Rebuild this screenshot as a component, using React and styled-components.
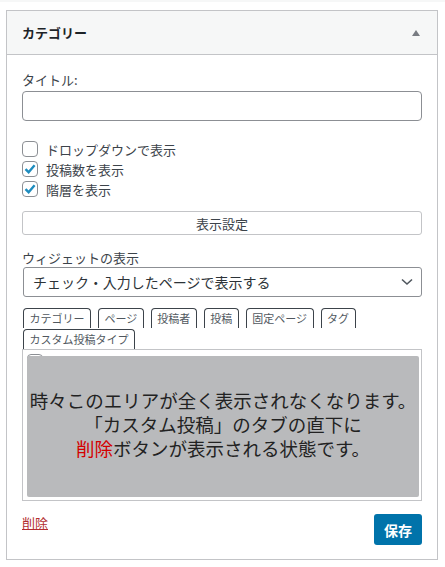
import React from 'react';
import styled, { createGlobalStyle } from 'styled-components';

const GlobalStyle = createGlobalStyle`
    html, body {
        margin: 0;
        padding: 0;
        background: #fff;
        font-family: "Noto Sans CJK JP", "Noto Sans", sans-serif;
        color: #1d2327;
    }
`;

const Page = styled.div`
    padding: 10px 7px 8px 6px;
    border-top: 2px solid #f6f7f7;
`;

const Panel = styled.section`
    border: 1px solid #c3c4c7;
    background: #fff;
    margin-top: -2px;
`;

const PanelHeader = styled.header`
    height: 43px;
    display: flex;
    align-items: center;
    justify-content: space-between;
    padding: 0 17px 0 15px;
    background: #f6f7f7;
    border-bottom: 1px solid #c3c4c7;
    font-size: 13px;
    font-weight: 600;
`;

const Caret = styled.span`
    width: 0;
    height: 0;
    border-left: 4px solid transparent;
    border-right: 4px solid transparent;
    border-bottom: 6px solid #787c82;
`;

const PanelBody = styled.div`
    padding: 16px 15px 14px;
`;

const Label = styled.div`
    font-size: 13px;
    line-height: 18px;
    color: #3c434a;
    margin-bottom: ${p => p.gap || 0}px;
`;

const TextInput = styled.input`
    display: block;
    box-sizing: border-box;
    width: 100%;
    height: 30px;
    border: 1px solid #8c8f94;
    border-radius: 4px;
    background: #fff;
    margin: 0 0 18px;
`;

const CheckRow = styled.label`
    display: flex;
    align-items: center;
    gap: 8px;
    height: 20px;
    font-size: 13px;
    color: #3c434a;
`;

const Box = styled.span`
    box-sizing: border-box;
    width: 16px;
    height: 16px;
    flex: none;
    border: 1px solid #8c8f94;
    border-radius: 4px;
    background: #fff;
    display: flex;
    align-items: center;
    justify-content: center;
`;

const Check = ({ checked }) => (
    <Box>
        {checked && (
            <svg width="14" height="14" viewBox="0 0 14 14">
                <path d="M2.5 7.2 L5.6 10.2 L11.6 3.2" fill="none" stroke="#1e8cbe" strokeWidth="2.4" />
            </svg>
        )}
    </Box>
);

const WideButton = styled.button`
    display: block;
    width: 100%;
    height: 24px;
    margin: 12px 0 14px;
    border: 1px solid #c3c4c7;
    border-radius: 3px;
    background: #fff;
    font-family: inherit;
    font-size: 13px;
    color: #3c434a;
    padding: 0;
`;

const Select = styled.div`
    box-sizing: border-box;
    height: 30px;
    display: flex;
    align-items: center;
    justify-content: space-between;
    padding: 0 8px 0 9px;
    border: 1px solid #8c8f94;
    border-radius: 3px;
    font-size: 14px;
    color: #2c3338;
    margin-left: 1px;
`;

const Tabs = styled.div`
    display: flex;
    flex-wrap: wrap;
    column-gap: 7px;
    row-gap: 1px;
    margin: 11px 0 0 1px;
`;

const Tab = styled.span`
    height: 20px;
    box-sizing: border-box;
    padding: 0 5.5px;
    border: 1px solid #3c434a;
    border-bottom: none;
    border-radius: 4px 4px 0 0;
    background: #fff;
    font-size: 11px;
    line-height: 19px;
    color: #50575e;
`;

const ListBox = styled.div`
    position: relative;
    box-sizing: border-box;
    height: 152px;
    border: 1px solid #c3c4c7;
    overflow: hidden;
`;

const ListRow = styled.div`
    display: flex;
    align-items: center;
    gap: 8px;
    height: 24px;
    padding-left: ${p => p.depth * 21 + 4}px;
    font-size: 13px;
`;

const Overlay = styled.div`
    position: absolute;
    top: 6px;
    left: 4px;
    right: 2px;
    bottom: 3px;
    background: #b9babc;
    border-radius: 2px;
    display: flex;
    flex-direction: column;
    align-items: center;
    justify-content: center;
    padding-bottom: 6px;
    font-size: 18.5px;
    line-height: 24px;
    color: #222;
    text-align: center;
    white-space: nowrap;
`;

const Red = styled.span`
    color: #d40000;
`;

const Footer = styled.div`
    display: flex;
    justify-content: space-between;
    align-items: flex-start;
    margin-top: 13px;
`;

const DeleteLink = styled.a`
    font-size: 13px;
    line-height: 18px;
    color: #b32d2e;
    text-decoration: underline;
`;

const SaveButton = styled.button`
    width: 48px;
    height: 31px;
    border: none;
    border-radius: 3px;
    background: #0073aa;
    color: #fff;
    font-family: inherit;
    font-size: 14px;
    font-weight: 600;
    padding: 0;
`;

const tabs = ['カテゴリー', 'ページ', '投稿者', '投稿', '固定ページ', 'タグ', 'カスタム投稿タイプ'];

export default function App() {
    return (
        <>
            <GlobalStyle />
            <Page>
                <Panel>
                    <PanelHeader>
                        カテゴリー
                        <Caret />
                    </PanelHeader>
                    <PanelBody>
                        <Label gap={2}>タイトル:</Label>
                        <TextInput />
                        <CheckRow><Check />ドロップダウンで表示</CheckRow>
                        <CheckRow><Check checked />投稿数を表示</CheckRow>
                        <CheckRow><Check checked />階層を表示</CheckRow>
                        <WideButton>表示設定</WideButton>
                        <Label>ウィジェットの表示</Label>
                        <Select>
                            チェック・入力したページで表示する
                            <svg width="12" height="8" viewBox="0 0 12 8">
                                <path d="M1 1.5 L6 6 L11 1.5" fill="none" stroke="#50575e" strokeWidth="1.6" />
                            </svg>
                        </Select>
                        <Tabs>
                            {tabs.map(t => <Tab key={t}>{t}</Tab>)}
                        </Tabs>
                        <ListBox>
                            <ListRow depth={0}><Check />未分類</ListRow>
                            <ListRow depth={0}><Check />お知らせ</ListRow>
                            <ListRow depth={1}><Check />イベント</ListRow>
                            <ListRow depth={1}><Check />ブログ</ListRow>
                            <ListRow depth={1}><Check />コラム</ListRow>
                            <ListRow depth={1}><Check />ニュース</ListRow>
                            <Overlay>
                                <div>時々このエリアが全く表示されなくなります。</div>
                                <div>「カスタム投稿」のタブの直下に</div>
                                <div><Red>削除</Red>ボタンが表示される状態です。</div>
                            </Overlay>
                        </ListBox>
                        <Footer>
                            <DeleteLink href="#">削除</DeleteLink>
                            <SaveButton>保存</SaveButton>
                        </Footer>
                    </PanelBody>
                </Panel>
            </Page>
        </>
    );
}
